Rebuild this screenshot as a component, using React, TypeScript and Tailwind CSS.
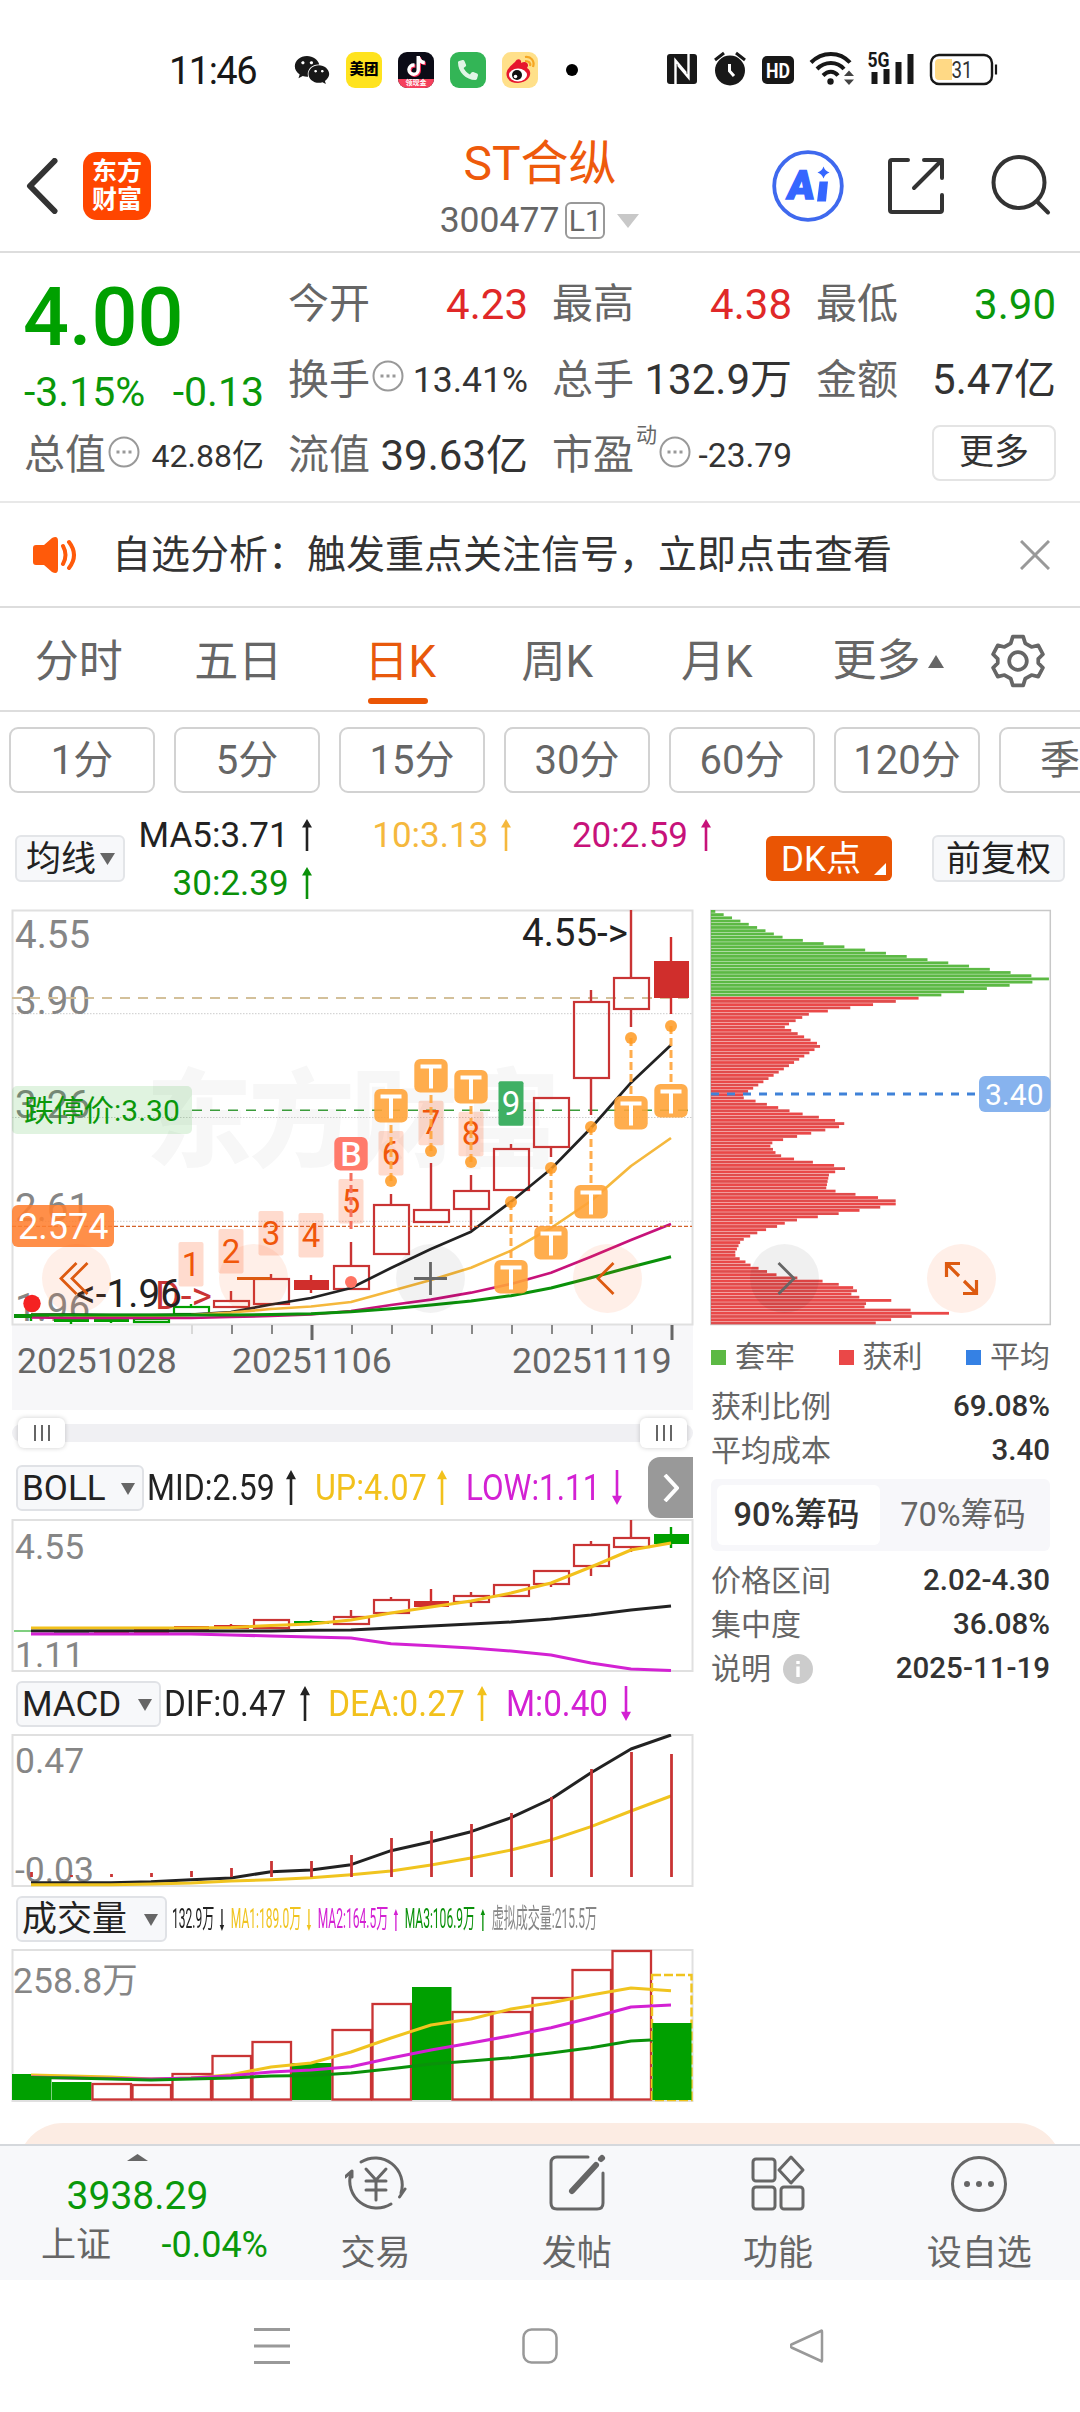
import type { ReactNode } from 'react';
import { FaPhone, FaTiktok, FaWeixin } from 'react-icons/fa6';

type Point = [number, number];
type Candle = {
  x: number;
  top: number;
  bottom: number;
  high?: number;
  low?: number;
  kind: 'up' | 'solid' | 'down' | 'downHollow';
};

const RED = '#c93434';
const GREEN = '#00a000';

const periods = ['1分', '5分', '15分', '30分', '60分', '120分', '季'];

const mainCandles: Candle[] = [
  { x: 31, top: 1314, bottom: 1318, low: 1321, kind: 'down' },
  { x: 71, top: 1319, bottom: 1322, low: 1324, kind: 'down' },
  { x: 111, top: 1319, bottom: 1322, low: 1323, kind: 'down' },
  { x: 151, top: 1318, bottom: 1323, kind: 'downHollow' },
  { x: 191, top: 1306, bottom: 1315, high: 1304, kind: 'downHollow' },
  { x: 231, top: 1300, bottom: 1308, high: 1291, kind: 'up' },
  { x: 271, top: 1278, bottom: 1305, high: 1274, kind: 'up' },
  { x: 311, top: 1280, bottom: 1290, high: 1275, low: 1293, kind: 'solid' },
  { x: 351, top: 1265, bottom: 1290, high: 1242, kind: 'up' },
  { x: 391, top: 1204, bottom: 1255, high: 1194, kind: 'up' },
  { x: 431, top: 1209, bottom: 1223, high: 1163, kind: 'up' },
  { x: 471, top: 1190, bottom: 1210, high: 1175, low: 1230, kind: 'up' },
  { x: 511, top: 1148, bottom: 1191, high: 1144, kind: 'up' },
  { x: 551, top: 1097, bottom: 1148, low: 1157, kind: 'up' },
  { x: 591, top: 1001, bottom: 1079, high: 990, low: 1115, kind: 'up' },
  { x: 631, top: 977, bottom: 1010, high: 910, low: 1027, kind: 'up' },
  { x: 671, top: 961, bottom: 998, high: 937, low: 1014, kind: 'solid' },
];

const bollCandles: Candle[] = [
  { x: 31, top: 1630.5, bottom: 1631.5, kind: 'down' },
  { x: 71, top: 1630, bottom: 1633, kind: 'down' },
  { x: 111, top: 1630, bottom: 1633, kind: 'solid' },
  { x: 151, top: 1629, bottom: 1633, kind: 'solid' },
  { x: 191, top: 1626, bottom: 1631, kind: 'solid' },
  { x: 231, top: 1625, bottom: 1629, high: 1624, kind: 'solid' },
  { x: 271, top: 1619, bottom: 1629, kind: 'up' },
  { x: 311, top: 1621, bottom: 1624, high: 1620, kind: 'down' },
  { x: 351, top: 1616, bottom: 1625, high: 1610, kind: 'up' },
  { x: 391, top: 1599, bottom: 1614, high: 1597, kind: 'up' },
  { x: 431, top: 1601, bottom: 1607, high: 1589, kind: 'solid' },
  { x: 471, top: 1595, bottom: 1603, high: 1592, low: 1607, kind: 'up' },
  { x: 511, top: 1584, bottom: 1597, kind: 'up' },
  { x: 551, top: 1570, bottom: 1585, low: 1587, kind: 'up' },
  { x: 591, top: 1544, bottom: 1567, high: 1541, low: 1576, kind: 'up' },
  { x: 631, top: 1537, bottom: 1548, high: 1520, low: 1552, kind: 'up' },
  { x: 671, top: 1534, bottom: 1544, high: 1527, low: 1548, kind: 'down' },
];

const signals: { n: number; top: number }[] = [
  { n: 1, top: 1242 },
  { n: 2, top: 1229 },
  { n: 3, top: 1211 },
  { n: 4, top: 1213 },
  { n: 5, top: 1179 },
  { n: 6, top: 1131 },
  { n: 7, top: 1100.7 },
  { n: 8, top: 1111.7 },
  { n: 9, top: 1081.3 },
];

const tMarks = [
  { x: 391, box: 1089, dot: 1181 },
  { x: 431, box: 1059, dot: 1151 },
  { x: 471, box: 1070, dot: 1162 },
  { x: 511, box: 1260, dot: 1202 },
  { x: 551, box: 1226, dot: 1168 },
  { x: 591, box: 1185, dot: 1127 },
  { x: 631, box: 1096, dot: 1038 },
  { x: 671, box: 1084, dot: 1026 },
];

const macdTops = [1872, 1875, 1874, 1873, 1871, 1868, 1861, 1861, 1855, 1838, 1831, 1824, 1813, 1797, 1769, 1752, 1754];

const volumes = [
  { top: 2074, down: true },
  { top: 2082, down: true },
  { top: 2083 },
  { top: 2084 },
  { top: 2073 },
  { top: 2055 },
  { top: 2041 },
  { top: 2063, down: true },
  { top: 2029 },
  { top: 2003 },
  { top: 1987, down: true },
  { top: 2011 },
  { top: 2011 },
  { top: 1997 },
  { top: 1969 },
  { top: 1950 },
  { top: 2023, down: true },
];

// chip distribution outline: [y offset, bar end], in thirds of a pixel
const chipShape: Point[] = [
  [35, 45], [112, 245], [122, 308], [237, 1050], [246, 1007], [333, 392], [343, 328], [381, 250],
  [438, 364], [447, 348], [573, 148], [592, 118], [601, 152], [640, 289], [668, 430], [678, 434],
  [688, 392], [717, 265], [727, 222], [736, 207], [765, 230], [775, 260], [784, 310], [794, 372],
  [804, 443], [813, 422], [822, 387], [870, 377], [880, 430], [890, 500], [900, 570], [909, 603],
  [919, 570], [929, 506], [967, 260], [977, 247], [986, 215], [996, 182], [1006, 160], [1015, 140],
  [1025, 122], [1063, 103], [1073, 107], [1082, 126], [1092, 142], [1101, 156], [1111, 186], [1121, 210],
  [1130, 240], [1140, 322], [1150, 398], [1159, 426], [1168, 473], [1179, 468], [1188, 444], [1197, 492],
  [1207, 610], [1217, 437], [1226, 518], [1236, 683], [1246, 780], [1255, 567], [1265, 575], [1273, 515],
];

function chipEnd(y: number) {
  const i = chipShape.findIndex(([py]) => py >= y);
  if (i <= 0) return i === 0 ? chipShape[0][1] : chipShape[chipShape.length - 1][1];
  const [y0, x0] = chipShape[i - 1];
  const [y1, x1] = chipShape[i];
  return x0 + ((x1 - x0) * (y - y0)) / (y1 - y0);
}

const chipBars = Array.from({ length: 129 }, (_, i) => {
  // 9.66 keeps every sample close to a row of the outline
  const raw = 35 + i * 9.66;
  return { y: 910 + i * 3.215, width: chipEnd(raw) / 3 - 10.7, trapped: raw < 288 };
});

// series values start at the first candle, one every 40px
function series(values: number[]) {
  return values.map((v, i) => `${31 + i * 40},${v}`).join(' ');
}

function Line({ values, color, width = 3 }: { values: number[]; color: string; width?: number }) {
  return <polyline points={series(values)} fill="none" stroke={color} strokeWidth={width} strokeLinejoin="round" />;
}

function Candles({ data }: { data: Candle[] }) {
  return (
    <g>
      {data.map((c) => {
        const color = c.kind === 'down' || c.kind === 'downHollow' ? GREEN : c.kind === 'solid' ? '#d02e2c' : RED;
        const filled = c.kind === 'down' || c.kind === 'solid';
        return (
          <g key={c.x} stroke={color} strokeWidth="2.2">
            {c.high && <line x1={c.x} x2={c.x} y1={c.high} y2={c.top} strokeWidth="2.4" />}
            {c.low && <line x1={c.x} x2={c.x} y1={c.bottom} y2={c.low} strokeWidth="2.4" />}
            {filled ? (
              <rect x={c.x - 17} y={c.top} width="35" height={c.bottom - c.top} fill={color} stroke="none" />
            ) : (
              <rect x={c.x - 17} y={c.top + 1} width="35" height={c.bottom - c.top - 2} fill="none" />
            )}
          </g>
        );
      })}
    </g>
  );
}

function Arrow({ down, tall }: { down?: boolean; tall?: boolean }) {
  return (
    <svg viewBox="0 0 12 34" preserveAspectRatio="none" className={`w-3 shrink-0 ${tall ? 'h-[35px]' : 'h-[32px]'} ${down ? 'rotate-180' : ''}`}>
      <path d="M6 0 L11 9 H7.300 V34 H4.700 V9 H1 Z" fill="currentColor" />
    </svg>
  );
}

function Caret({ up, className = '' }: { up?: boolean; className?: string }) {
  return (
    <svg viewBox="0 0 14 12" preserveAspectRatio="none" className={`shrink-0 ${up ? 'rotate-180' : ''} ${className}`}>
      <path d="M0 0 H14 L7 12 Z" fill="currentColor" />
    </svg>
  );
}

function Dots({ className = '' }: { className?: string }) {
  return (
    <svg viewBox="0 0 32 32" className={`ml-0.5 size-8 shrink-0 text-[#999] ${className}`}>
      <circle cx="16" cy="16" r="14.5" fill="none" stroke="currentColor" strokeWidth="2" />
      <path d="M8.5 16h3M14.5 16h3M20.5 16h3" stroke="currentColor" strokeWidth="3" />
    </svg>
  );
}

function StatusBar() {
  return (
    <div className="flex h-[120px] items-center pt-5 pl-[169px] text-[#181818]">
      <span className="w-[123px] pt-0.5 text-[38px] leading-none font-[450] tracking-[-0.04em]">11:46</span>
      <FaWeixin className="ml-0.5 size-9" />
      <div className="ml-4 flex size-9 items-center justify-center rounded-[9px] bg-[#ffe31e] text-[14.5px] font-black text-black">美团</div>
      <div className="ml-4 flex size-9 flex-col items-center overflow-hidden rounded-[9px] bg-[#0b0b16]">
        <FaTiktok className="mt-1 size-[20px] text-white drop-shadow-[1px_1px_0_#fe2c55]" />
        <div className="mt-[3px] flex h-[9px] w-full items-center justify-center bg-[#f5405c] text-[7px] font-bold text-white">领现金</div>
      </div>
      <div className="ml-4 flex size-9 items-center justify-center rounded-[9px] bg-[#33b556]">
        <FaPhone className="size-[20px] -scale-x-100 rotate-90 text-[#e0f5e5]" />
      </div>
      <svg viewBox="0 0 36 36" className="ml-4 size-9">
        <rect width="36" height="36" rx="9" fill="#ffe08a" />
        <path d="M13 10 C16 5 20 8 19 11 C24 8 28 12 25 16 C31 19 29 30 16 31 C4 31 2 21 7 16 C9 13 11 12 13 10" fill="#e6162d" />
        <ellipse cx="16" cy="23" rx="9" ry="6.5" fill="#fff" />
        <circle cx="15" cy="23" r="5" fill="#111" />
        <circle cx="13.5" cy="24.5" r="1.8" fill="#fff" />
        <path d="M23 5 C29 4 33 9 31 15 M23 9 C27 9 29 11 28 14" fill="none" stroke="#f5a623" strokeWidth="2.2" />
      </svg>
      <div className="ml-[28px] size-3 rounded-full bg-black" />
      <svg viewBox="667 48 334 44" className="ml-[89px] h-11 w-[334px]">
        <rect x="667" y="54" width="30" height="30" rx="3" fill="#181818" />
        <path d="M675.500 84 V60.500 L686 73 M688.500 54 V77.500 L678 65" fill="none" stroke="#fff" strokeWidth="2.400" />
        <circle cx="730" cy="70.5" r="15" fill="#181818" />
        <path d="M715 60 l9 -7 M745 60 l-9 -7" stroke="#181818" strokeWidth="3" />
        <path d="M729.5 64 v7 l4.5 5" fill="none" stroke="#fff" strokeWidth="3" />
        <rect x="762" y="56" width="32" height="28" rx="5" fill="#181818" />
        <text x="778" y="77.5" textAnchor="middle" fontSize="21" fontWeight="700" fill="#fff" textLength="24" lengthAdjust="spacingAndGlyphs">HD</text>
        <g fill="none" stroke="#181818" strokeWidth="4">
          <path d="M811 62.500 C822 51 840 51 850 62.500" />
          <path d="M817 69 C825 61 837 61 844 69" />
          <path d="M823 75.500 C828 70.500 834 70.500 838 75.500" />
        </g>
        <circle cx="830.500" cy="81.500" r="3.200" fill="#181818" />
        <path d="M844 76 h10 l-5 -5.500 z M844 79.500 h10 l-5 5.500 z" fill="#444" />
        <text x="867.500" y="67" fontSize="20" fontWeight="700" fill="#181818" textLength="22" lengthAdjust="spacingAndGlyphs">5G</text>
        <path d="M871.500 72 h6 v12 h-6 z M883.500 69 h6 v15 h-6 z M895.500 62 h6 v22 h-6 z M907.500 54 h6 v30 h-6 z" fill="#181818" />
        <rect x="931" y="55" width="61" height="29" rx="8" fill="none" stroke="#181818" strokeWidth="2.400" />
        <path d="M952 59 h-13 a4 4 0 0 0 -4 4 v13 a4 4 0 0 0 4 4 h13 z" fill="#ffd985" />
        <path d="M996 64.500 v10" stroke="#181818" strokeWidth="2.200" />
        <text x="962" y="78" textAnchor="middle" fontSize="23" fill="#333" textLength="21" lengthAdjust="spacingAndGlyphs">31</text>
      </svg>
    </div>
  );
}

function Header() {
  return (
    <header className="grid h-[133px] grid-cols-[1fr_auto_1fr] items-center border-b-2 border-[#ddd]">
      <div className="flex items-center pl-[26px]">
        <svg viewBox="0 0 32 56" className="h-14 w-8" fill="none" stroke="#333" strokeWidth="6" strokeLinecap="round" strokeLinejoin="round">
          <path d="M28.500 3 L4 28 L28.500 53" />
        </svg>
        <div className="ml-[25px] flex size-[68px] flex-col items-center justify-center rounded-[14px] bg-[#ff4600] text-[25px] leading-[28px] font-bold text-white">
          <span>东方</span>
          <span>财富</span>
        </div>
      </div>
      <div className="flex flex-col items-center pt-[13px]">
        <div className="text-[48px] leading-[57px] text-[#ee5a0b]">ST合纵</div>
        <div className="flex h-[57px] items-center text-[35.500px] text-[#666]">
          300477
          <span className="ml-[6px] flex h-[37px] w-10 items-center justify-center rounded-md border-2 border-[#999] text-[30px] leading-none">L1</span>
          <Caret className="mr-px ml-3 h-[14px] w-[22px] text-[#c8c8c8]" />
        </div>
      </div>
      <div className="flex items-center justify-end pr-[28px]">
        <svg viewBox="0 0 72 72" className="size-[72px]">
          <circle cx="36" cy="36" r="33.800" fill="none" stroke="#3f69ee" strokeWidth="3.800" />
          <text x="20" y="49" fontSize="40" fontWeight="900" fill="#3566ff" stroke="#3566ff" strokeWidth="1.500" textLength="27" lengthAdjust="spacingAndGlyphs" transform="skewX(-7)">A</text>
          <path d="M47.500 31.500 h8.500 l-2 20 h-9 z" fill="#3566ff" />
          <path d="M51.500 16.500 q1.500 4.500 6 6 q-4.500 1.500 -6 6 q-1.500 -4.500 -6 -6 q4.500 -1.500 6 -6" fill="#3566ff" />
        </svg>
        <svg viewBox="0 0 58 58" className="ml-[43px] size-[58px]" fill="none" stroke="#333" strokeWidth="4" strokeLinecap="round" strokeLinejoin="round">
          <path d="M21 3 H5 Q3 3 3 5 V53 Q3 55 5 55 H53 Q55 55 55 53 V38 M37 3 H55 V21 M55 3 L27 31" />
        </svg>
        <svg viewBox="0 0 62 62" className="ml-[45px] size-[62px]" fill="none" stroke="#333" strokeWidth="4" strokeLinecap="round">
          <circle cx="29" cy="27.500" r="25.500" />
          <path d="M47 46.500 L58 57.500" />
        </svg>
      </div>
    </header>
  );
}

function Quote({ label, children }: { label: ReactNode; children: ReactNode }) {
  return (
    <div className="flex h-[75.500px] items-center justify-between whitespace-nowrap">
      <div className="flex items-center text-[41px] text-[#666]">{label}</div>
      {children}
    </div>
  );
}

function QuotePanel() {
  return (
    <section className="grid h-[250px] grid-cols-4 gap-x-6 border-b-2 border-[#e8e8e8] px-6 pt-[14px] text-[42px] leading-none text-[#333]">
      <div>
        <div className="-ml-px flex h-[99px] items-center pt-0.5 text-[81px] font-medium text-[#00a000]">4.00</div>
        <div className="flex h-[52px] items-center justify-between text-[41px] text-[#0a980a]">
          <span>-3.15%</span>
          <span>-0.13</span>
        </div>
        <Quote label={<>总值<Dots className="mb-2" /></>}>
          <span className="text-[32px]">42.88亿</span>
        </Quote>
      </div>
      <div>
        <Quote label="今开"><span className="text-[#e02828]">4.23</span></Quote>
        <Quote label={<>换手<Dots className="mb-2" /></>}><span className="text-[35.500px]">13.41%</span></Quote>
        <Quote label="流值">39.63亿</Quote>
      </div>
      <div>
        <Quote label="最高"><span className="text-[#e02828]">4.38</span></Quote>
        <Quote label="总手">132.9万</Quote>
        <Quote label={<>市盈<span className="mb-10 ml-0.5 text-[21px]">动</span><Dots className="mb-2" /></>}>
          <span className="text-[33.500px]">-23.79</span>
        </Quote>
      </div>
      <div>
        <Quote label="最低"><span className="text-[#0a980a]">3.90</span></Quote>
        <Quote label="金额">5.47亿</Quote>
        <div className="flex h-[69px] items-center justify-end">
          <button className="h-[56px] w-[124px] rounded-lg border-2 border-[#e4e4e4] text-[35px]">更多</button>
        </div>
      </div>
    </section>
  );
}

function Notice() {
  return (
    <section className="flex h-[105px] items-center border-b-2 border-[#ddd] pr-[30px] pl-[33px]">
      <svg viewBox="0 0 46 36" className="h-9 w-[46px]">
        <path d="M3 8 H11 L19 1 Q25 -2 25 4 V32 Q25 38 19 35 L11 28 H3 Q0 28 0 25 V11 Q0 8 3 8" fill="#ff5a0a" />
        <path d="M30 9 Q35 18 30 27 M36 5 Q46 18 36 31" fill="none" stroke="#ff5a0a" strokeWidth="4" strokeLinecap="round" />
      </svg>
      <p className="ml-[33px] flex-1 pt-0.5 text-[39px] whitespace-nowrap text-[#333]">自选分析：触发重点关注信号，立即点击查看</p>
      <svg viewBox="0 0 30 30" className="size-[30px]" stroke="#999" strokeWidth="3">
        <path d="M1 1 L29 29 M29 1 L1 29" />
      </svg>
    </section>
  );
}

function KTabs() {
  return (
    <nav className="flex h-[104px] border-b-2 border-[#ddd] text-[44px] leading-none text-[#666]">
      {['分时', '五日', '日K', '周K', '月K'].map((tab) => (
        <div
          key={tab}
          className={`flex w-[159.500px] flex-col items-center pt-[32px] ${tab === '日K' ? 'pl-[3px] text-[#e8590c]' : 'pr-0.5'}`}
        >
          <span>{tab}</span>
          {tab === '日K' && <span className="mt-[14px] mr-1 h-1.5 w-[60px] rounded-full bg-[#ea5504]" />}
        </div>
      ))}
      <div className="flex h-[106px] flex-1 items-center pl-[35px]">
        更多
        <Caret up className="ml-[7px] h-[13px] w-[16px]" />
        <svg viewBox="0 0 52 52" className="ml-[47px] size-[54px]" fill="none" stroke="#666" strokeWidth="3.600" strokeLinejoin="round">
          <path d="M21 2.500 H31 L33 9 L39 12.500 L45.500 11 L50 19.500 L45.500 24 V28 L50 32.500 L45.500 41 L39 39.500 L33 43 L31 49.500 H21 L19 43 L13 39.500 L6.500 41 L2 32.500 L6.500 28 V24 L2 19.500 L6.500 11 L13 12.500 L19 9 Z" />
          <circle cx="26" cy="26" r="8.500" />
        </svg>
      </div>
    </nav>
  );
}

function MaLegend() {
  return (
    <section className="flex h-[107px] items-start text-[35px] leading-none">
      <button className="mt-[42px] ml-[15px] flex h-[47px] w-[110px] items-center rounded-md border-2 border-[#e3e5e8] bg-[#f7f8fa] pt-px pl-[9px] whitespace-nowrap text-[#222]">
        均线
        <Caret className="ml-1 h-3 w-[15px] text-[#666]" />
      </button>
      <div className="mt-[18px] grid w-[599px] grid-cols-3 gap-y-0">
        {[
          { text: 'MA5:3.71', color: 'text-[#222]' },
          { text: '10:3.13', color: 'text-[#f5b83d]' },
          { text: '20:2.59', color: 'text-[#c7127a]' },
          { text: '30:2.39', color: 'text-[#0a910a]' },
        ].map((m) => (
          <div key={m.text} className={`flex h-12 items-center justify-end gap-[12px] pr-[12px] ${m.color}`}>
            {m.text}
            <Arrow />
          </div>
        ))}
      </div>
      <button className="relative mt-[43px] ml-[42px] h-[45px] w-[126px] rounded-md bg-[#ea5504] pt-px pr-4 text-white">
        DK点
        <svg viewBox="0 0 12 12" className="absolute right-1.5 bottom-1.5 size-3">
          <path d="M12 0 V12 H0 Z" fill="#fff" />
        </svg>
      </button>
      <button className="mt-[42px] ml-10 h-[47px] w-[133px] rounded-md border-2 border-[#e3e5e8] bg-[#f7f8fa] pt-px whitespace-nowrap text-[#222]">
        前复权
      </button>
    </section>
  );
}

function MainChart() {
  return (
    <svg viewBox="0 900 702 510" className="block h-[510px] w-[702px]">
      <text x="146" y="1158" fontSize="106" fontWeight="900" fill="#f7f7f7" textLength="414">东方财富</text>
      <rect x="12" y="1325" width="681" height="85" fill="#f7f7f9" />
      <rect x="12.500" y="910.500" width="680" height="414" fill="none" stroke="#e0e0e0" strokeWidth="2" />
      {[1013.7, 1117.5, 1221.3].map((y) => (
        <line key={y} x1="12" x2="692" y1={y} y2={y} stroke="#ccc" strokeWidth="1" strokeDasharray="1.500 1.500" />
      ))}
      <g fontSize="38.500" fill="#868686">
        <text x="15" y="948">4.55</text>
        <text x="15" y="1014">3.90</text>
        <text x="15" y="1118">3.26</text>
        <text x="15" y="1221">2.61</text>
        <text x="15" y="1321">1.96</text>
      </g>
      <line x1="12" x2="690" y1="998" y2="998" stroke="#d3c09a" strokeWidth="1.800" strokeDasharray="10 8" />
      <rect x="12" y="1086" width="180" height="48" rx="5" fill="#00a000" fillOpacity="0.12" />
      <text x="24" y="1121" fontSize="30" fill="#0a980a">跌停价:3.30</text>
      <line x1="192" x2="690" y1="1110.300" y2="1110.300" stroke="#3a9b3a" strokeWidth="1.500" strokeDasharray="10 8" />
      <circle cx="32" cy="1303.500" r="8.700" fill="#f52222" />

      <Candles data={mainCandles} />
      <Line color="#222" width={2.7} values={[1314.5, 1314.5, 1315, 1315, 1314.500, 1312, 1304.5, 1298, 1288, 1268, 1249, 1231.7, 1201.7, 1169, 1128, 1082.7, 1045]} />
      <Line color="#f5b83d" width={2.7} values={[1315, 1315.5, 1316, 1316, 1315, 1312.5, 1309, 1306.5, 1302, 1291, 1280, 1267.7, 1250.7, 1228, 1201, 1166, 1138]} />
      <Line color="#c7127a" width={2.7} values={[1317.5, 1318, 1318, 1318, 1318, 1317, 1316, 1314.5, 1311, 1305, 1299.7, 1292.7, 1284, 1272.7, 1256.7, 1240, 1224]} />
      <Line color="#0a910a" values={[1315, 1315, 1315, 1315, 1315, 1315, 1314.5, 1313.7, 1311.7, 1308.7, 1305, 1301, 1295.7, 1288, 1277.7, 1267, 1256.7]} />
      <line x1="14" x2="32" y1="1316" y2="1316" stroke="#0a910a" strokeWidth="4" />
      <line x1="12" x2="692" y1="1226.300" y2="1226.300" stroke="#d2622a" strokeWidth="1.300" strokeDasharray="4 2" />
      <rect x="12" y="1205" width="102" height="42" rx="6" fill="#ff8030" fillOpacity="0.88" />
      <text x="18" y="1238.500" fontSize="36" fill="#fff">2.574</text>

      {signals.map((s, i) => (
        <g key={s.n}>
          <rect x={178.5 + i * 40} y={s.top} width="25" height="44.500" rx="2" fill={s.n === 9 ? '#3fb064' : '#ff5a1e'} fillOpacity={s.n === 9 ? 1 : 0.22} />
          <text x={191 + i * 40} y={s.top + 33.5} textAnchor="middle" fontSize="33" fill={s.n === 9 ? '#fff' : '#f0560a'}>
            {s.n}
          </text>
        </g>
      ))}
      {tMarks.map((t) => (
        <g key={t.x}>
          <line x1={t.x} x2={t.x} y1={t.box < t.dot ? t.box + 36 : t.dot} y2={t.box < t.dot ? t.dot : t.box} stroke="#ffa43a" strokeWidth="3" strokeDasharray="8 4" strokeOpacity="0.9" />
          <circle cx={t.x} cy={t.dot} r="6" fill="#ff9a22" fillOpacity="0.85" />
          <rect x={t.x - 16.7} y={t.box} width="33.400" height="33.400" rx="6" fill="#ffa43a" fillOpacity="0.9" />
          <path d={`M${t.x - 10.5} ${t.box + 7.5} h21 M${t.x} ${t.box + 6} v23.500`} stroke="#fff" strokeWidth="4" />
        </g>
      ))}
      <line x1="351" x2="351" y1="1173" y2="1229" stroke="#f4705f" strokeWidth="3" strokeDasharray="8 4" />
      <circle cx="351" cy="1282" r="6" fill="#ff7363" />
      <rect x="334.300" y="1137" width="33.400" height="33.400" rx="6" fill="#ff7a6b" />
      <text x="351" y="1166" textAnchor="middle" fontSize="34" fontWeight="500" fill="#fff">B</text>

      <g fontSize="38.500">
        <text x="155" y="1308.500" fill="#c93434" textLength="57" lengthAdjust="spacingAndGlyphs">D-&gt;</text>
        <text x="76" y="1307" fill="#222" textLength="106">&lt;-1.96</text>
        <text x="522" y="946" fill="#222">4.55-&gt;</text>
      </g>

      <g fill="#ff641e" fillOpacity="0.1">
        <circle cx="76.500" cy="1278.500" r="34.500" />
        <circle cx="253.500" cy="1278.500" r="34.500" />
        <circle cx="607.500" cy="1278.500" r="34.500" />
      </g>
      <circle cx="430.500" cy="1278.500" r="34.500" fill="#000" fillOpacity="0.05" />
      <g fill="none" stroke="#dd5a10" strokeWidth="2.800">
        <path d="M76.500 1263 L61 1278.500 L76.500 1294 M87.500 1263 L72 1278.500 L87.500 1294" />
        <path d="M237 1278.500 H270 M613.500 1263 L598 1278.500 L613.500 1294" />
        <path d="M414 1278.500 H447 M430.500 1262 V1295" stroke="#666" />
      </g>

      {Array.from({ length: 13 }, (_, i) => {
        const major = i === 3 || i === 12;
        return (
          <line key={i} x1={192 + i * 40} x2={192 + i * 40} y1="1325" y2={major ? 1340 : 1334} stroke={i === 0 ? '#d8d8d8' : major ? '#666' : '#888'} strokeWidth={major ? 3 : 2} />
        );
      })}
      <g fontSize="35.500" fill="#666">
        <text x="17" y="1373">20251028</text>
        <text x="232" y="1373">20251106</text>
        <text x="512" y="1373">20251119</text>
      </g>
    </svg>
  );
}

function RangeSlider() {
  const handle = (
    <div className="flex h-[30px] w-[47px] items-center justify-center gap-[5px] rounded-md bg-white shadow-[0_0_5px_rgba(0,0,0,0.2)]">
      <i className="h-4 w-[2px] bg-[#666]" />
      <i className="h-4 w-[2px] bg-[#666]" />
      <i className="h-4 w-[2px] bg-[#666]" />
    </div>
  );
  return (
    <div className="flex h-[46px] items-center pl-3">
      <div className="flex h-[18px] w-[681px] shrink-0 items-center justify-between rounded-full bg-[#f0f0f3] px-1.5">
        {handle}
        {handle}
      </div>
    </div>
  );
}

function IndicatorButton({ name, className }: { name: string; className: string }) {
  return (
    <button className={`ml-4 flex h-[46px] shrink-0 items-center justify-between rounded-md border-2 border-[#e0e2e6] bg-[#f7f8fa] pt-0.5 pr-[7px] pl-1 text-[35px] leading-none whitespace-nowrap text-[#222] ${className}`}>
      {name}
      <Caret className="h-3 w-[14px] text-[#666]" />
    </button>
  );
}

// value text squeezed into a fixed slot, followed by its trend arrow
function Reading({ text, slot, squeeze, down }: { text: string; slot: string; squeeze: string; down?: boolean }) {
  return (
    <div className={`flex items-center justify-between ${slot}`}>
      <span className={`w-0 origin-left text-[37px] leading-none whitespace-nowrap ${squeeze}`}>{text}</span>
      <Arrow down={down} tall />
    </div>
  );
}

function BollPanel() {
  return (
    <>
      <div className="flex h-[63px] items-center">
        <IndicatorButton name="BOLL" className="w-[128px]" />
        <Reading text="MID:2.59" slot="ml-[3px] w-[150px] text-[#222]" squeeze="scale-x-[0.865]" />
        <Reading text="UP:4.07" slot="ml-[18px] w-[133px] text-[#f2c11c]" squeeze="scale-x-[0.87]" />
        <Reading text="LOW:1.11" slot="ml-[18px] w-[157px] text-[#d321d3]" squeeze="scale-x-[0.85]" down />
        <button className="ml-[25px] flex h-[61px] w-[45px] items-center justify-center rounded-l-xl bg-[#999]">
          <svg viewBox="0 0 16 28" className="h-7 w-4" fill="none" stroke="#fff" strokeWidth="4">
            <path d="M2 1 L14 14 L2 27" />
          </svg>
        </button>
      </div>
      <svg viewBox="0 1519 702 154" className="block h-[154px] w-[702px]">
        <rect x="12.500" y="1520" width="680" height="151" fill="none" stroke="#e0e0e0" strokeWidth="2" />
        <g fontSize="35.500" fill="#868686">
          <text x="15" y="1559">4.55</text>
          <text x="15" y="1667">1.11</text>
        </g>
        <Candles data={bollCandles} />
        <Line color="#f2c11c" values={[1628, 1628, 1628, 1628, 1628, 1627.5, 1625.5, 1624, 1620, 1613, 1607, 1601, 1593, 1583, 1567, 1550, 1543]} />
        <Line color="#222" values={[1631, 1631, 1631, 1631, 1631, 1631, 1631, 1630.3, 1630, 1628, 1626, 1624, 1622, 1619, 1615, 1610, 1606]} />
        <Line color="#d321d3" values={[1634, 1634, 1634, 1634, 1634, 1635, 1636, 1637, 1638, 1643.7, 1645.7, 1648, 1651, 1655, 1663, 1669, 1670.5]} />
      </svg>
    </>
  );
}

function MacdPanel() {
  return (
    <>
      <div className="flex h-[61px] items-center">
        <IndicatorButton name="MACD" className="w-[145px]" />
        <Reading text="DIF:0.47" slot="ml-[3px] w-[147px] text-[#222]" squeeze="scale-x-[0.9]" />
        <Reading text="DEA:0.27" slot="ml-[17px] w-[160px] text-[#f2c11c]" squeeze="scale-x-[0.91]" />
        <Reading text="M:0.40" slot="ml-[18px] w-[126px] text-[#d321d3]" squeeze="scale-x-[0.9]" down />
      </div>
      <svg viewBox="0 1734 702 154" className="block h-[154px] w-[702px]">
        <rect x="12.500" y="1735" width="680" height="151" fill="none" stroke="#e0e0e0" strokeWidth="2" />
        <g fontSize="35.500" fill="#868686">
          <text x="15" y="1773">0.47</text>
          <text x="15" y="1882">-0.03</text>
        </g>
        <Line color="#222" values={[1882.7, 1882.7, 1882.7, 1881.7, 1879.7, 1878, 1871.7, 1870, 1864.7, 1850.7, 1841.7, 1831.7, 1817.7, 1799, 1772.7, 1749, 1735]} />
        <Line color="#f0c41f" values={[1884.7, 1884.7, 1884.7, 1884, 1883, 1881, 1879.7, 1877.7, 1874.7, 1871, 1865, 1858, 1850, 1840, 1826.7, 1811, 1796]} />
        {macdTops.map((y, i) => (
          <line key={i} x1={31.5 + i * 40} x2={31.5 + i * 40} y1={y} y2="1877" stroke="#c93434" strokeWidth="2.800" />
        ))}
      </svg>
    </>
  );
}

function VolumePanel() {
  return (
    <>
      <div className="flex h-[61px] items-center">
        <IndicatorButton name="成交量" className="w-[151px]" />
        <div className="ml-[5px] flex w-0 origin-left scale-x-[0.446] items-center pt-0.5 text-[27px] leading-none whitespace-nowrap">
          {[
            { text: '132.9万', color: 'text-[#222]', down: true },
            { text: 'MA1:189.0万', color: 'text-[#f0c41f]', down: true },
            { text: 'MA2:164.5万', color: 'text-[#d321d3]' },
            { text: 'MA3:106.9万', color: 'text-[#0a910a]' },
          ].map((v) => (
            <span key={v.text} className={`mr-[12px] flex items-center gap-[9px] ${v.color}`}>
              {v.text}
              <svg viewBox="0 0 16 22" className={`h-[22px] w-4 ${v.down ? 'rotate-180' : ''}`}>
                <path d="M8 0 L13 6 H9.500 V22 H6.500 V6 H3 Z" fill="currentColor" />
              </svg>
            </span>
          ))}
          <span className="text-[#868686]">虚拟成交量:215.5万</span>
        </div>
      </div>
      <svg viewBox="0 1949 702 154" className="block h-[154px] w-[702px]">
        <rect x="12.500" y="1950" width="680" height="151" fill="none" stroke="#e0e0e0" strokeWidth="2" />
        <text x="13" y="1993" fontSize="35.500" fill="#868686">258.8万</text>
        {volumes.slice(0, 16).map((v, i) => (
          <rect
            key={i}
            x={v.down ? 12 + i * 40 : 12.5 + i * 40}
            y={v.down ? v.top : v.top + 1}
            width={v.down ? 39.5 : 38.5}
            height={v.down ? 2100 - v.top : 2098.5 - v.top}
            fill={v.down ? GREEN : 'none'}
            stroke={v.down ? 'none' : '#c93434'}
            strokeWidth="2.3"
          />
        ))}
        <Line color="#f0c41f" values={[2075, 2076, 2077, 2079, 2078, 2074.7, 2067, 2063, 2052, 2038, 2025, 2019, 2009, 2002.7, 1995, 1988, 1990.7]} />
        <Line color="#d321d3" values={[2077, 2078, 2078.5, 2079, 2078, 2075.7, 2072, 2070, 2066.7, 2058, 2050, 2043, 2035.7, 2027.7, 2017.7, 2007, 2005]} />
        <Line color="#0a910a" values={[2077.5, 2078, 2079, 2080, 2079, 2078, 2076, 2075.5, 2073, 2068.7, 2064, 2061, 2057.7, 2053, 2047.7, 2041, 2039]} />
        <rect x="652" y="1975" width="39.500" height="125" fill="none" stroke="#f0c41f" strokeWidth="2.400" strokeDasharray="9 3" />
        <rect x="652.500" y="2023" width="39" height="77" fill={GREEN} />
      </svg>
    </>
  );
}

function ChipPanel() {
  return (
    <aside className="w-[378px] text-[30px] leading-none text-[#666]">
      <svg viewBox="702 900 378 434" className="block h-[434px] w-[378px]">
        <rect x="710.800" y="910.500" width="339.500" height="414" fill="none" stroke="#c8c8c8" strokeWidth="1.500" />
        {chipBars.map((b, i) => (
          <rect key={i} x="711" y={b.y} width={b.width} height="2.800" fill={b.trapped ? '#5cb944' : i % 2 ? '#ea4848' : '#e04c4c'} />
        ))}
        <line x1="711" x2="975" y1="1094" y2="1094" stroke="#3f82d8" strokeWidth="3" strokeDasharray="8 8" />
        <rect x="979" y="1076" width="71.500" height="36" rx="6" fill="#87b3ee" />
        <text x="985" y="1105" fontSize="30" fill="#fff">3.40</text>
        <circle cx="784.500" cy="1278.500" r="34.500" fill="#000" fillOpacity="0.06" />
        <path d="M778.500 1263 L794 1278.500 L778.500 1294" fill="none" stroke="#666" strokeWidth="2.800" />
        <circle cx="961.500" cy="1278.500" r="34.500" fill="#ff641e" fillOpacity="0.1" />
        <path d="M960 1263.500 H946.500 V1277 M946.500 1263.500 L959 1276 M963 1293.500 H976.500 V1280 M976.500 1293.500 L964 1281" fill="none" stroke="#dd5a10" strokeWidth="3.200" />
      </svg>
      <div className="flex h-[46px] w-[348px] items-center justify-between pl-[9px]">
        {[
          { name: '套牢', dot: 'bg-[#5cb944]' },
          { name: '获利', dot: 'bg-[#ea4848]' },
          { name: '平均', dot: 'bg-[#3581e4]' },
        ].map((l) => (
          <span key={l.name} className="flex items-center">
            <i className={`mr-[9px] size-[15px] ${l.dot}`} />
            {l.name}
          </span>
        ))}
      </div>
      <div className="w-[348px] pt-[5px] pl-[9px]">
        <ChipRow label="获利比例" value="69.08%" />
        <ChipRow label="平均成本" value="3.40" />
        <div className="mt-[6px] mb-[8px] flex h-[72px] w-[339px] rounded-md bg-[#f7f7fa] p-1.5 text-[32.500px] whitespace-nowrap">
          <div className="flex w-[163px] items-center justify-center rounded-md bg-white pt-px pr-1 font-medium text-[#333]">90%筹码</div>
          <div className="flex flex-1 items-center justify-center pt-px pl-0.5">70%筹码</div>
        </div>
        <ChipRow label="价格区间" value="2.02-4.30" />
        <ChipRow label="集中度" value="36.08%" />
        <ChipRow
          label={
            <>
              说明
              <svg viewBox="0 0 30 30" className="ml-3 size-[30px]">
                <circle cx="15" cy="15" r="15" fill="#ccc" />
                <path d="M15 12.500 V23 M15 7 V10" stroke="#fff" strokeWidth="3.400" />
              </svg>
            </>
          }
          value="2025-11-19"
        />
      </div>
    </aside>
  );
}

function ChipRow({ label, value }: { label: ReactNode; value: string }) {
  return (
    <div className="flex h-11 items-center justify-between">
      <span className="flex items-center">{label}</span>
      <span className="text-[29.500px] font-medium text-[#333]">{value}</span>
    </div>
  );
}

const actions: { name: string; icon: ReactNode }[] = [
  {
    name: '交易',
    icon: (
      <>
        <path d="M16 9 A27 27 0 0 1 56 40 M46 51 A27 27 0 0 1 6 20" />
        <path d="M60 36 L54.500 44 M0 24 L7 18 V24" />
        <path d="M21 16 L31 27 L41 16 M21 28 H41 M21 37 H41 M31 27 V47" />
      </>
    ),
  },
  {
    name: '发帖',
    icon: (
      <>
        <path d="M42 4 H11 Q5 4 5 10 V50 Q5 56 11 56 H51 Q57 56 57 50 V20" />
        <path d="M50 12 L26 38" strokeWidth="6" />
        <path d="M55 6 L56 5" strokeWidth="6" />
      </>
    ),
  },
  {
    name: '功能',
    icon: (
      <>
        <rect x="6" y="6" width="22" height="22" rx="3" />
        <path d="M44 4 L56 17 L44 30 L32 17 Z" />
        <rect x="6" y="34" width="22" height="22" rx="3" />
        <rect x="34" y="34" width="22" height="22" rx="3" />
      </>
    ),
  },
  {
    name: '设自选',
    icon: (
      <>
        <circle cx="31" cy="31" r="26.500" />
        <path d="M19 31 h.01 M31 31 h.01 M43 31 h.01" strokeWidth="6" />
      </>
    ),
  },
];

function BottomBar() {
  return (
    <footer className="flex h-[136px] border-t-2 border-[#d5d8dc] bg-[#f7f8fa] text-[35px] leading-none text-[#666]">
      <div className="flex w-[275px] flex-col items-center pt-2">
        <Caret up className="h-[7px] w-[21px]" />
        <span className="mt-[16px] text-[39px] text-[#0a980a]">3938.29</span>
        <div className="mt-[11px] flex w-full items-center justify-between pr-[7px] pl-[41px]">
          上证
          <span className="text-[36px] text-[#0a980a]">-0.04%</span>
        </div>
      </div>
      {actions.map((a) => (
        <div key={a.name} className="flex w-[201.250px] flex-col items-center pt-[7px]">
          <svg viewBox="0 0 62 62" className="size-[62px]" fill="none" stroke="#666" strokeWidth="3" strokeLinecap="round" strokeLinejoin="round">
            {a.icon}
          </svg>
          <span className="mt-[21px]">{a.name}</span>
        </div>
      ))}
    </footer>
  );
}

export default function App() {
  return (
    <div className="flex h-[2412px] w-[1080px] flex-col overflow-hidden bg-white font-['Roboto','Noto_Sans_CJK_SC',sans-serif]">
      <StatusBar />
      <Header />
      <QuotePanel />
      <Notice />
      <KTabs />
      <div className="flex h-[81px] shrink-0 items-end gap-[19px] overflow-hidden pl-[9px]">
        {periods.map((p) => (
          <button key={p} className="h-[66px] w-[146px] shrink-0 rounded-[9px] border-2 border-[#d2d2d2] pt-0.5 text-[40px] leading-none text-[#666] last:pr-6">
            {p}
          </button>
        ))}
      </div>
      <MaLegend />
      <div className="flex">
        <div className="w-[702px]">
          <MainChart />
          <RangeSlider />
          <BollPanel />
          <MacdPanel />
          <VolumePanel />
        </div>
        <ChipPanel />
      </div>
      <div className="mx-[18px] mt-5 h-[21px] shrink-0 overflow-hidden">
        <div className="h-[100px] rounded-[45px] bg-[#fcece3]" />
      </div>
      <BottomBar />
      <div className="flex flex-1 items-start justify-center gap-[232px] pt-12">
        <svg viewBox="0 0 36 36" className="size-9" stroke="#999" strokeWidth="3">
          <path d="M0 1.500 H36 M0 18 H36 M0 34.500 H36" />
        </svg>
        <svg viewBox="0 0 36 36" className="size-9" fill="none" stroke="#999" strokeWidth="2.500">
          <rect x="1.500" y="1.500" width="33" height="33" rx="8" />
        </svg>
        <svg viewBox="0 0 36 36" className="size-9" fill="none" stroke="#999" strokeWidth="2.500" strokeLinejoin="round">
          <path d="M31 3 Q32 2 32 4 V32 Q32 34 31 33 L1.500 19.500 Q-0.500 18 1.500 16.500 Z" />
        </svg>
      </div>
    </div>
  );
}
